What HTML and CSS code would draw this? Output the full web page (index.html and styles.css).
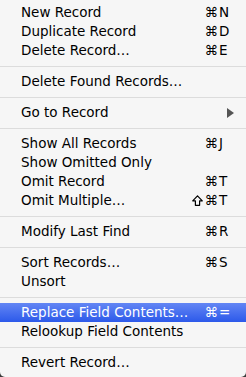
FILE: index.html
```html
<!DOCTYPE html>
<html lang="en">
<head>
    <meta charset="UTF-8">
    <meta name="viewport" content="width=device-width, initial-scale=1.0">
    <title>Records Menu</title>
    <link rel="stylesheet" href="styles.css">
</head>
<body>
    <div class="menu">
        <div class="item"><span class="label">New Record</span><span class="mods">⌘</span><span class="key">N</span></div>
        <div class="item"><span class="label">Duplicate Record</span><span class="mods">⌘</span><span class="key">D</span></div>
        <div class="item"><span class="label">Delete Record…</span><span class="mods">⌘</span><span class="key">E</span></div>
        <div class="sep"></div>
        <div class="item"><span class="label">Delete Found Records…</span></div>
        <div class="sep"></div>
        <div class="item"><span class="label">Go to Record</span><span class="mods"></span><span class="key"><span class="arrow"></span></span></div>
        <div class="sep"></div>
        <div class="item"><span class="label">Show All Records</span><span class="mods">⌘</span><span class="key">J</span></div>
        <div class="item"><span class="label">Show Omitted Only</span></div>
        <div class="item"><span class="label">Omit Record</span><span class="mods">⌘</span><span class="key">T</span></div>
        <div class="item">
            <span class="label">Omit Multiple…</span>
            <span class="mods"><svg class="shift" width="11" height="11" viewBox="0 0 11 11"><path d="M5.5 0.8 L10.3 5.8 H7.6 V10.3 H3.4 V5.8 H0.7 Z" fill="none" stroke="currentColor" stroke-width="1.2" stroke-linejoin="round"/></svg>⌘</span>
            <span class="key">T</span>
        </div>
        <div class="sep"></div>
        <div class="item"><span class="label">Modify Last Find</span><span class="mods">⌘</span><span class="key">R</span></div>
        <div class="sep"></div>
        <div class="item"><span class="label">Sort Records…</span><span class="mods">⌘</span><span class="key">S</span></div>
        <div class="item"><span class="label">Unsort</span></div>
        <div class="sep"></div>
        <div class="item selected"><span class="label">Replace Field Contents…</span><span class="mods">⌘</span><span class="key">=</span></div>
        <div class="item"><span class="label">Relookup Field Contents</span></div>
        <div class="sep"></div>
        <div class="item"><span class="label">Revert Record…</span></div>
    </div>
</body>
</html>
```

FILE: styles.css
```css
body {
    margin: 0;
    padding: 0;
    background-color: #3a3a3a;
    font-family: "DejaVu Sans", sans-serif;
    font-size: 13.5px;
}
.menu {
    height: 377px;
    box-sizing: border-box;
    padding-top: 3px;
    background-color: #f6f6f6;
    border-radius: 0 0 5px 5px;
    color: #000;
}
.item {
    display: grid;
    grid-template-columns: minmax(0, 1fr) 40px 27px; /* label, modifiers, key */
    height: 19px;
    line-height: 19px;
    padding-left: 21px;
    white-space: nowrap;
}
.mods {
    text-align: right;
    padding-right: 1px;
}
.shift {
    vertical-align: -1px;
    margin-right: 2px;
}
.key {
    display: flex;
    align-items: center;
}
.item.selected {
    background: linear-gradient(#6386f4, #2c59ea);
    color: #fff;
}
.arrow {
    margin-left: 8px;
    width: 0;
    height: 0;
    border-left: 7px solid #555;
    border-top: 5px solid transparent;
    border-bottom: 5px solid transparent;
}
.sep {
    height: 12px;
    display: flex;
    align-items: center;
}
.sep::after {
    content: "";
    flex: 1;
    height: 1px;
    background-color: #dcdcdc;
}
```
